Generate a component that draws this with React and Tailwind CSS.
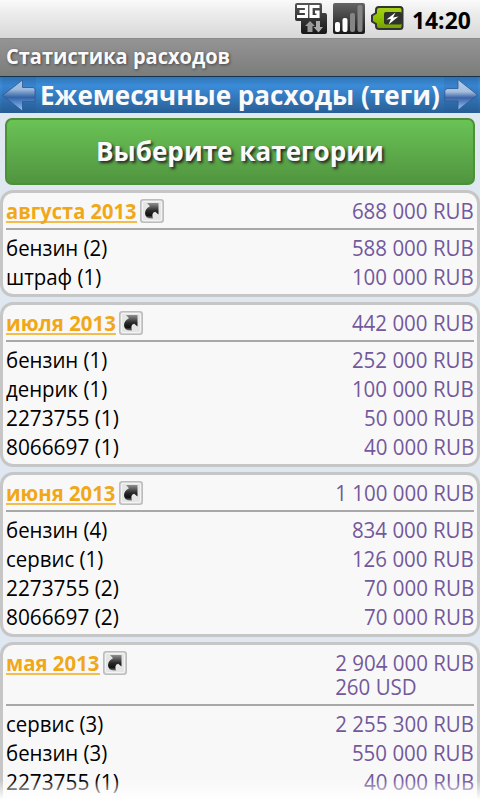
import React from "react";

const months = [
  { name: "августа 2013", width: 131, totals: ["688 000 RUB"], rows: [["бензин (2)", "588 000 RUB"], ["штраф (1)", "100 000 RUB"]] },
  { name: "июля 2013", width: 110, totals: ["442 000 RUB"], rows: [["бензин (1)", "252 000 RUB"], ["денрик (1)", "100 000 RUB"], ["2273755 (1)", "50 000 RUB"], ["8066697 (1)", "40 000 RUB"]] },
  { name: "июня 2013", width: 110, totals: ["1 100 000 RUB"], rows: [["бензин (4)", "834 000 RUB"], ["сервис (1)", "126 000 RUB"], ["2273755 (2)", "70 000 RUB"], ["8066697 (2)", "70 000 RUB"]] },
  { name: "мая 2013", width: 94, totals: ["2 904 000 RUB", "260 USD"], rows: [["сервис (3)", "2 255 300 RUB"], ["бензин (3)", "550 000 RUB"], ["2273755 (1)", "40 000 RUB"]] },
];

function NetworkIcon() {
  return (
    <svg width="33" height="32" viewBox="0 0 33 32">
      <defs>
        <linearGradient id="net" x1="0" y1="0" x2="0" y2="1">
          <stop offset="0" stopColor="#555" />
          <stop offset="1" stopColor="#161616" />
        </linearGradient>
      </defs>
      <path d="M2 0H25Q27 0 27 2V10H30Q32 10 32 12V29Q32 31 30 31H8Q6 31 6 29V18H2Q0 18 0 16V2Q0 0 2 0Z" fill="url(#net)" />
      <path d="M2 3.500H11.500V13.500H2M4.500 8.500H11.500" fill="none" stroke="#fff" strokeWidth="3.200" />
      <path d="M24.500 3.500H16V13.500H23V9H20" fill="none" stroke="#fff" strokeWidth="3.200" />
      <path d="M15 18L20 23H17.500V29H12.500V23H10Z" fill="#999" />
      <path d="M21 18H25V24H28L23.500 29.500L18.500 24H21Z" fill="#aaa" />
    </svg>
  );
}

function SignalIcon() {
  return (
    <svg width="32" height="32" viewBox="0 0 32 32">
      <defs>
        <linearGradient id="sig" x1="0" y1="0" x2="0" y2="1">
          <stop offset="0" stopColor="#656565" />
          <stop offset=".55" stopColor="#3c3c3c" />
          <stop offset="1" stopColor="#171717" />
        </linearGradient>
      </defs>
      <rect width="32" height="31" rx="2" fill="url(#sig)" />
      <rect x="2" y="19" width="5" height="10" rx="2" fill="#fff" />
      <rect x="9.500" y="15" width="5" height="14" rx="2" fill="#fff" />
      <rect x="17" y="10" width="5" height="19" rx="2" fill="#858585" />
      <rect x="24.500" y="2" width="5" height="27" rx="2" fill="#858585" />
    </svg>
  );
}

function BatteryIcon() {
  return (
    <svg width="33" height="25" viewBox="0 0 33 25">
      <defs>
        <linearGradient id="bat" x1="0" y1="0" x2="0" y2="1">
          <stop offset="0" stopColor="#a6d31d" />
          <stop offset=".5" stopColor="#8fc000" />
          <stop offset="1" stopColor="#71a000" />
        </linearGradient>
      </defs>
      <path d="M8 1H29Q31.500 1 31.500 3.500V20.500Q31.500 23 29 23H8Q5 23 5 20V18L1 15.500V9.500L5 7V4Q5 1 8 1Z" fill="url(#bat)" stroke="#333" strokeWidth="2" />
      <rect x="13" y="6" width="18" height="12.500" rx="2" fill="#30322c" />
      <path d="M24.500 6.500L15.500 13.500L20 13L17.500 18.500L27.500 10.500L22 11.500Z" fill="#fff" />
    </svg>
  );
}

function BackArrow() {
  return (
    <svg width="36" height="36" viewBox="0 0 36 36" className="shrink-0">
      <defs>
        <linearGradient id="back" x1="0" y1="0" x2="0" y2="1">
          <stop offset="0" stopColor="#a3c4e6" />
          <stop offset=".3" stopColor="#9dbadc" />
          <stop offset=".56" stopColor="#3363a8" />
          <stop offset=".75" stopColor="#5c8fd0" />
          <stop offset="1" stopColor="#a0c8f0" />
        </linearGradient>
      </defs>
      <rect x="2" width="34" height="36" fill="#1d4d80" opacity=".12" />
      <path d="M2.500 18.500L22.500 3V10.500H33.500L35 12.500V24.500H22.500V34Z" fill="url(#back)" stroke="#2c5a92" strokeOpacity=".8" strokeLinejoin="round" />
    </svg>
  );
}

function ForwardArrow() {
  return (
    <svg width="36" height="36" viewBox="0 0 36 36" className="shrink-0">
      <defs>
        <linearGradient id="fwd" x1="0" y1="0" x2="0" y2="1">
          <stop offset="0" stopColor="#b4cee8" />
          <stop offset=".4" stopColor="#a6bfdf" />
          <stop offset=".6" stopColor="#3c64a6" />
          <stop offset=".75" stopColor="#5c88c8" />
          <stop offset="1" stopColor="#a5cbf0" />
        </linearGradient>
      </defs>
      <rect width="34" height="36" fill="#1d4d80" opacity=".12" />
      <path d="M33.500 18L14 2.500V11.500H3L.8 13.500V24H14V33Z" fill="url(#fwd)" stroke="#2c5a92" strokeOpacity=".8" strokeLinejoin="round" />
    </svg>
  );
}

function LinkIcon() {
  return (
    <svg width="24" height="24" viewBox="0 0 24 24" className="ml-[3px] shrink-0">
      <defs>
        <linearGradient id="lnk" x1="0" y1="0" x2="0" y2="1">
          <stop offset="0" stopColor="#909090" />
          <stop offset=".5" stopColor="#2a2a2a" />
          <stop offset=".8" stopColor="#111" />
          <stop offset="1" stopColor="#777" />
        </linearGradient>
      </defs>
      <rect x=".8" y=".8" width="22.400" height="22.400" rx="2.500" fill="#e4e6e4" stroke="#bdbdbd" strokeWidth="1.600" />
      <rect x="2.500" y="2.500" width="19" height="19" rx="1.500" fill="none" stroke="#f3f4f3" />
      <path d="M7 4H18.500V15.500L15.200 12.800Q11 14 13 19.500Q5 20 5 14Q5.500 9.500 10 7.300Z" fill="url(#lnk)" />
    </svg>
  );
}

// Stretches a line of text to a known advance width.
function Fit({ width, children }) {
  const ref = React.useRef(null);
  const [scale, setScale] = React.useState(1);
  React.useLayoutEffect(() => {
    setScale(width / ref.current.offsetWidth);
  }, [width]);
  return (
    <span ref={ref} className="inline-block origin-left whitespace-nowrap" style={{ transform: `scaleX(${scale})` }}>
      {children}
    </span>
  );
}

function Month({ m }) {
  return (
    <section className="shrink-0 rounded-[13px] border-[3px] border-[#c6c6c6] bg-[#f8f8f8] px-[3px] pb-[3px]">
      <div className="flex items-start justify-between border-b-2 border-[#a8a8a8] py-[5px]">
        <div className="mt-px flex h-6 items-center">
          <div className="flex h-6 border-b-2 border-[#f3bc4d] leading-[23px] font-bold text-[#f0a818]">
            <div style={{ width: m.width }}>
              <Fit width={m.width - 0.5}>{m.name}</Fit>
            </div>
          </div>
          <LinkIcon />
        </div>
        <div className="mb-px origin-right scale-x-[.932] text-[#73589c]">
          {m.totals.map((t) => <div key={t} className="h-6 leading-6">{t}</div>)}
        </div>
      </div>
      <div className="pt-[3px]">
        {m.rows.map(([label, value]) => (
          <div key={label} className="flex h-[29px] items-center justify-between leading-[29px] whitespace-nowrap">
            <span className={/^\d/.test(label) ? "origin-left scale-x-[.946]" : "origin-left scale-x-[.928]"}>{label}</span>
            <span className="origin-right scale-x-[.932] text-[#73589c]">{value}</span>
          </div>
        ))}
      </div>
    </section>
  );
}

export default function App() {
  return (
    <div className="relative flex h-[800px] w-[480px] flex-col overflow-hidden bg-[#dfe8f1] font-['Open_Sans','Noto_Sans',sans-serif] text-[22px] text-black">
      <div className="flex h-[38px] shrink-0 items-start justify-end bg-linear-to-b from-[#fafafa] via-[#eeeeee] via-30% to-[#d8d8d8] pt-[3px]">
        <NetworkIcon />
        <div className="ml-[5px]"><SignalIcon /></div>
        <div className="mt-[3px] ml-[6px]"><BatteryIcon /></div>
        <div className="ml-[8px] w-[68px] text-[24px] leading-[33px] font-bold"><Fit width={59}>14:20</Fit></div>
      </div>
      <div className="flex h-[38px] shrink-0 items-center border-t border-[#8a8a8a] bg-linear-to-b from-[#949494] to-[#7b7d7a] pb-[2px] pl-[6px] text-[21px] font-bold text-[#fafafa] [text-shadow:1px_1px_3px_#444]">
        <Fit width={224}>Статистика расходов</Fit>
      </div>
      <div className="flex h-[37px] shrink-0 items-center border-t border-[#17334d] bg-linear-to-b from-[#3076b8] via-[#3b8cd9] via-25% to-[#285f96]">
        <BackArrow />
        <div className="w-[408px] pl-[4px] text-[27px] leading-[36px] font-bold text-[#fafafa]"><Fit width={400}>Ежемесячные расходы (теги)</Fit></div>
        <ForwardArrow />
      </div>
      <div className="mx-[5px] mt-[5px] flex h-[67px] shrink-0 items-center rounded-[7px] border-2 border-[#4c9038] bg-linear-to-b from-[#6ac355] to-[#519540] pl-[89px] text-[27px] font-bold text-[#fafafa] [text-shadow:2px_2px_3px_#222]">
        <Fit width={288}>Выберите категории</Fit>
      </div>
      <main className="mt-[5px] flex min-h-0 flex-1 flex-col gap-[5px] overflow-hidden">
        {months.map((m, i) => (
          <div key={m.name} className={i === 3 ? "flex shrink-0 flex-col *:pb-10" : "flex shrink-0 flex-col"}>
            <Month m={m} />
          </div>
        ))}
      </main>
      <div className="absolute inset-x-0 bottom-0 h-5 bg-linear-to-b from-white/0 to-white" />
    </div>
  );
}
